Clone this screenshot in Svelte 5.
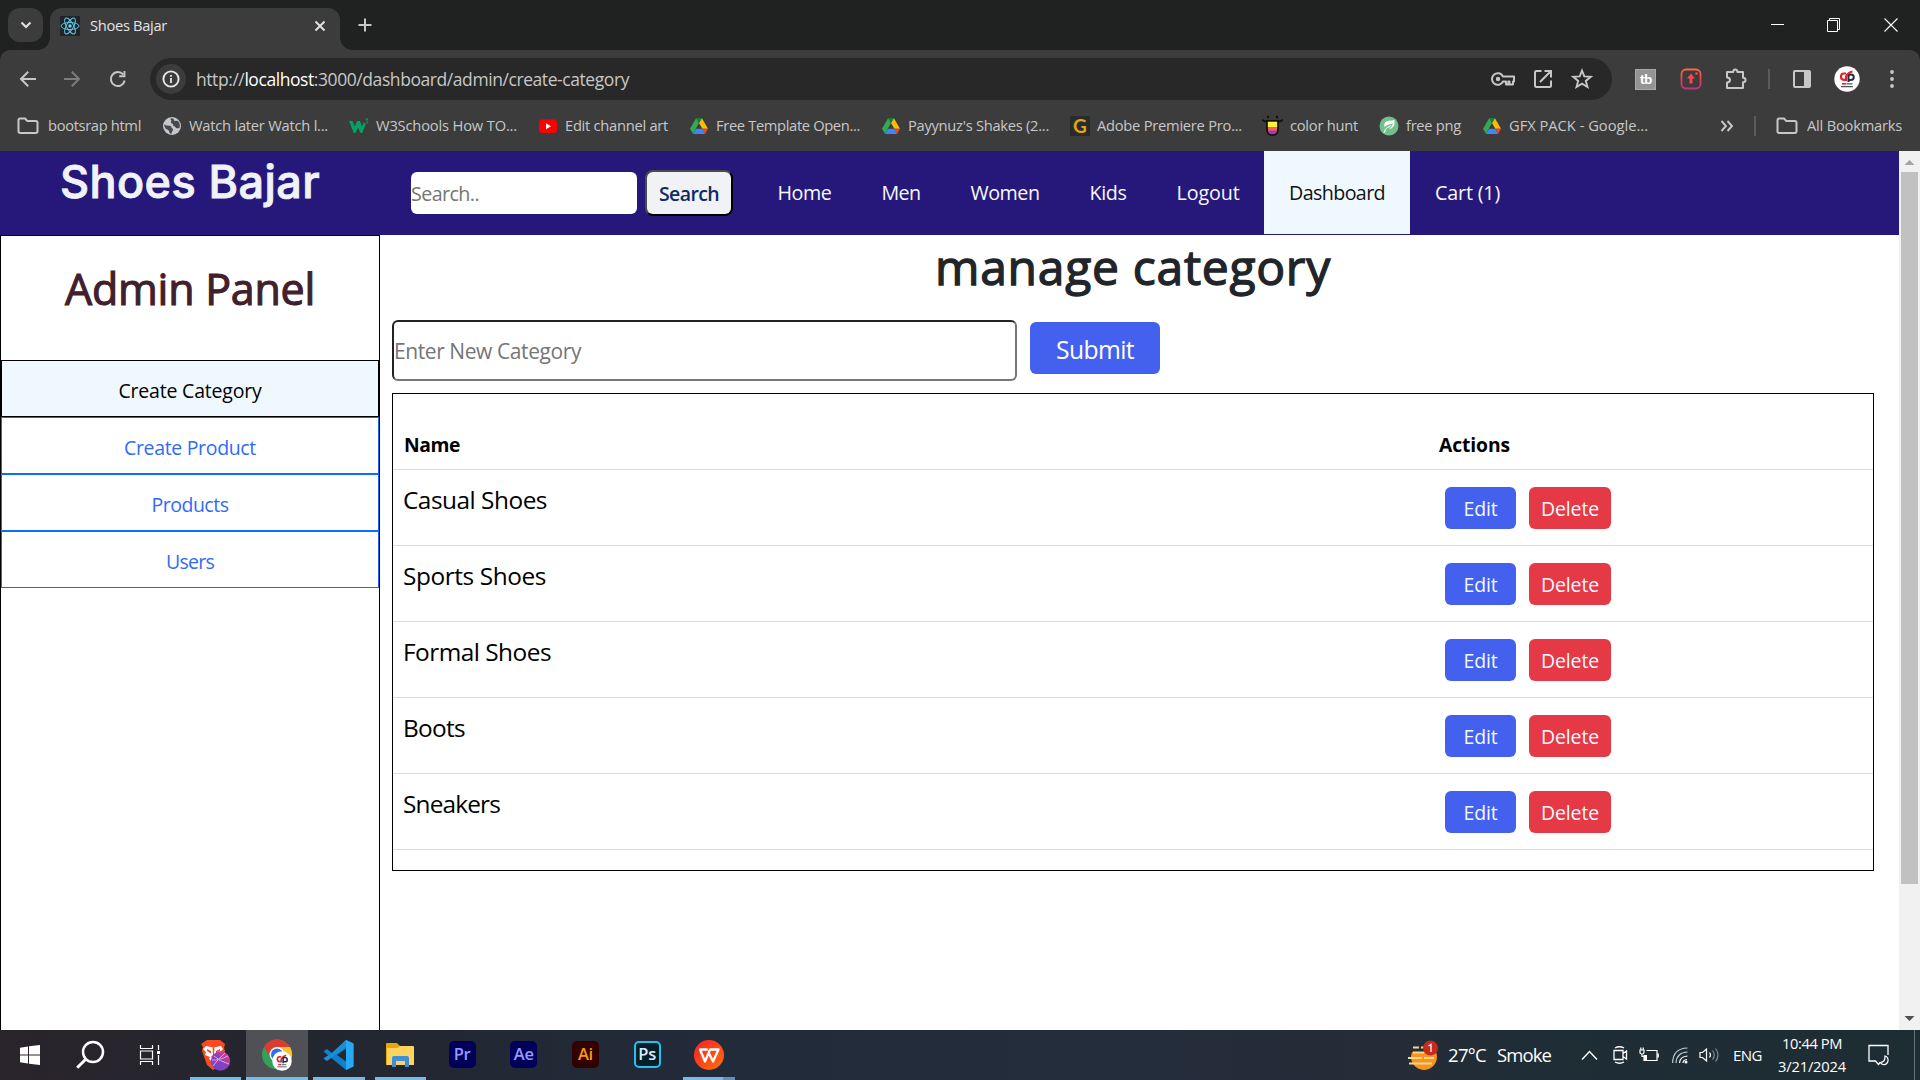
<script>
  const bookmarks = [
    { icon: 'folder', text: 'bootsrap html', w: 93 },
    { icon: 'globe', text: 'Watch later Watch l...', w: 139 },
    { icon: 'w3', text: 'W3Schools How TO...', w: 141 },
    { icon: 'yt', text: 'Edit channel art', w: 103 },
    { icon: 'drive', text: 'Free Template Open...', w: 144 },
    { icon: 'drive', text: "Payynuz's Shakes (2...", w: 141 },
    { icon: 'g', text: 'Adobe Premiere Pro...', w: 145 },
    { icon: 'hunt', text: 'color hunt', w: 68 },
    { icon: 'png', text: 'free png', w: 55 },
    { icon: 'drive', text: 'GFX PACK - Google...', w: 139 }
  ];
  const links = [
    { text: 'Home', w: 54 },
    { text: 'Men', w: 39 },
    { text: 'Women', w: 69 },
    { text: 'Kids', w: 37 },
    { text: 'Logout', w: 63 },
    { text: 'Dashboard', w: 96, active: true },
    { text: 'Cart (1)', w: 65 }
  ];
  const menu = [
    { text: 'Create Category', w: 143, active: true },
    { text: 'Create Product', w: 132 },
    { text: 'Products', w: 77 },
    { text: 'Users', w: 48 }
  ];
  const categories = [
    { name: 'Casual Shoes', w: 144 },
    { name: 'Sports Shoes', w: 143 },
    { name: 'Formal Shoes', w: 148 },
    { name: 'Boots', w: 62 },
    { name: 'Sneakers', w: 97 }
  ];
  const apps = [
    { id: 'brave', open: true },
    { id: 'chrome', open: true, active: true },
    { id: 'code', open: true },
    { id: 'files', open: true },
    { id: 'Pr', bg: '#00005b', fg: '#9999ff', line: '#00005b' },
    { id: 'Ae', bg: '#00005b', fg: '#9999ff', line: '#00005b' },
    { id: 'Ai', bg: '#330000', fg: '#ff9a00', line: '#330000' },
    { id: 'Ps', bg: '#061e26', fg: '#d5f1ff', line: '#26c0f5' },
    { id: 'wps', open: true, stacked: true }
  ];

  // Tracks a label so that it fills the given width in pixels.
  function fit(node, width) {
    const natural = node.getBoundingClientRect().width;
    const n = node.textContent.length;
    node.style.letterSpacing = `${((width - natural) / n).toFixed(3)}px`;
  }
</script>

{#snippet label(text, w)}<span class="label" use:fit={w}>{text}</span>{/snippet}

{#snippet folder()}
  <svg width="22" height="18" viewBox="0 0 22 18"><path d="M1.5 3.2Q1.5 1.5 3.2 1.5H8L10.300 4H18.800Q20.500 4 20.500 5.700V14.300Q20.500 16 18.800 16H3.200Q1.500 16 1.500 14.300Z" fill="none" stroke="#c7c7c7" stroke-width="2" /></svg>
{/snippet}

{#snippet bmIcon(id)}
  {#if id === 'folder'}
    {@render folder()}
  {:else if id === 'globe'}
    <svg width="20" height="20" viewBox="0 0 20 20"><circle cx="10" cy="10" r="9" fill="#c4c7cc" /><path d="M2 8.500Q5 10 8 9.800Q10 10 9.500 12Q12 13 10.500 15Q9.500 16 9.500 18Q7 17.500 7 15Q6.500 13.500 4 13Q2.500 11.500 2 8.500ZM9.500 2Q7.500 3.500 9.500 4.500Q8 6 9.500 7.500Q12 8 11 9.800Q13.500 10 14 12Q16 12.500 17.500 12Q18.500 9 17 6Q15 4 12.500 5Q12 2.500 9.500 2Z" fill="#47484a" /></svg>
  {:else if id === 'w3'}
    <svg width="20" height="20" viewBox="0 0 20 20"><path d="M0 5H3.600L5.800 10.500L8 5H11L13 10.500L15 6L16.500 9L13.200 17H11.500L9 11.500L6.500 17H4.800Z" fill="#04a065" /><path d="M16.300 3H19L17.700 4.700Q19.500 5.300 18.700 6.800Q17.800 8 16.200 7" fill="none" stroke="#04a065" /></svg>
  {:else if id === 'yt'}
    <svg width="20" height="20" viewBox="0 0 20 20"><rect x="1" y="3.500" width="18" height="13.500" rx="3.500" fill="#f00" /><path d="M8 7.200L13 10.200L8 13.200Z" fill="#fff" /></svg>
  {:else if id === 'drive'}
    <svg width="20" height="20" viewBox="0 0 20 20"><path d="M7.300 2L10 7L4 17.700L1 12.700Z" fill="#34a853" /><path d="M12.800 2L19 12.700H13.300L10 7Z" fill="#fbbc04" /><path d="M7.300 2H12.800L10 7Z" fill="#188038" /><path d="M4 17.900L7 12.700H13.300L16 17.900Z" fill="#4285f4" /><path d="M13.300 12.700H19L16 17.900Z" fill="#ea4335" /></svg>
  {:else if id === 'g'}
    <span class="gee">G</span>
  {:else if id === 'hunt'}
    <svg width="20" height="20" viewBox="0 0 20 20"><circle cx="5" cy="1" r="1.200" fill="#101010" /><circle cx="14" cy="1" r="1.200" fill="#101010" /><path d="M-.5 3.500Q1.500 6.500 4 4.800H15Q17.500 6.500 19.500 3.500" fill="none" stroke="#101010" stroke-width="1.800" /><path d="M4 5H15V13Q15 19 9.500 19Q4 19 4 13Z" fill="#ff5b5b" stroke="#101010" stroke-width="1.800" /><path d="M4.900 5.700H14.100V11H4.900Z" fill="#fff338" /><path d="M5 14.500H14Q13.500 18.200 9.500 18.200Q5.500 18.200 5 14.500Z" fill="#a03cb0" /></svg>
  {:else if id === 'png'}
    <svg width="20" height="20" viewBox="0 0 20 20"><circle cx="10" cy="10" r="9.500" fill="#72c08c" /><path d="M4.500 17.500Q5 12.500 9.500 10.500L13 8.500Q11 11.800 8 12.200Q5.800 13.500 6.500 15.500ZM5.300 11Q4.500 5 10 4.800Q13 4.800 15.500 4Q16.500 12 10 13.300Q13.500 10.500 14 7.500Q9 8 5.300 11Z" fill="#fff" /></svg>
  {/if}
{/snippet}

{#snippet profile(size)}
  <svg width={size} height={size} viewBox="0 0 26 26"><circle cx="13" cy="13" r="12.700" fill="#fff" /><path d="M12 7.500H9.800Q7 7.500 7 10.800Q7 13.800 9.800 13.800H12V10.500Q14 6.500 18.500 5.500" fill="none" stroke="#e32129" stroke-width="2.200" /><path d="M14.500 16V9.800Q15 8.500 16.800 8.500Q19.800 8.500 19.800 11.300Q19.800 14 16.800 14H15" fill="none" stroke="#20304a" stroke-width="2" /><path d="M8 17.800H12" stroke="#e32129" stroke-width="1.600" /><path d="M12.500 17.800H18.500M7 20.600H19" stroke="#555" stroke-width="1.200" /></svg>
{/snippet}

<div class="screen">
  <header class="browser">
    <div class="tabs">
      <div class="tabsearch"><svg width="12" height="8" viewBox="0 0 12 8"><path d="M1.500 1.500L6 6L10.500 1.500" fill="none" stroke="#e3e3e3" stroke-width="2" /></svg></div>
      <div class="tab">
        <svg class="fav" width="20" height="20" viewBox="0 0 20 20"><rect width="20" height="20" rx="1" fill="#20232a" /><g fill="none" stroke="#61c7e0" stroke-width="1"><ellipse cx="10" cy="10" rx="9" ry="3.500" /><ellipse cx="10" cy="10" rx="9" ry="3.500" transform="rotate(60 10 10)" /><ellipse cx="10" cy="10" rx="9" ry="3.500" transform="rotate(120 10 10)" /></g><circle cx="10" cy="10" r="1.700" fill="#61dafb" /></svg>
        {@render label('Shoes Bajar', 77)}
        <svg class="x" width="12" height="12" viewBox="0 0 12 12"><path d="M1.500 1.500L10.500 10.500M10.500 1.500L1.500 10.500" stroke="#e3e3e3" stroke-width="1.900" /></svg>
      </div>
      <svg class="plus" width="14" height="14" viewBox="0 0 14 14"><path d="M7 .5V13.500M.5 7H13.500" stroke="#c7c7c7" stroke-width="2" /></svg>
      <div class="winctl">
        <svg width="13" height="13" viewBox="0 0 13 13"><path d="M0 6.500H13" stroke="#fff" /></svg>
        <svg width="14" height="14" viewBox="0 0 14 14"><path d="M.5 2.500H10.500V13.500H.5ZM2.500 2.500V.500H12.500V11.500H10.500" fill="none" stroke="#fff" /></svg>
        <svg width="14" height="14" viewBox="0 0 14 14"><path d="M.5 .5L13.500 13.500M13.500 .5L.5 13.500" stroke="#fff" stroke-width="1.100" /></svg>
      </div>
    </div>

    <div class="toolbar">
      <div class="nav">
        <svg width="18" height="18" viewBox="0 0 18 18"><path d="M17 9H2.500M9.200 1.800L2 9L9.200 16.200" fill="none" stroke="#c7c7c7" stroke-width="2" /></svg>
        <svg width="18" height="18" viewBox="0 0 18 18"><path d="M0 9H14.500M7.800 1.800L15 9L7.800 16.200" fill="none" stroke="#7d7d7d" stroke-width="2" /></svg>
        <svg width="18" height="18" viewBox="0 0 18 18"><path d="M15.700 10.500A7 7 0 1 1 14.200 4.500" fill="none" stroke="#c7c7c7" stroke-width="2" /><path d="M16.400 1V7.200H10.200V5.300H14.500V1Z" fill="#c7c7c7" /></svg>
      </div>
      <div class="omnibox">
        <div class="info"><svg width="18" height="18" viewBox="0 0 18 18"><circle cx="9" cy="9" r="7.600" fill="none" stroke="#e8e8e8" stroke-width="1.900" /><path d="M9 8V13M9 5V6.800" stroke="#e8e8e8" stroke-width="1.800" /></svg></div>
        <span class="url"><span class="label" use:fit={433}>http://<b>localhost</b>:3000/dashboard/admin/create-category</span></span>
        <div class="omniicons">
          <svg width="24" height="20" viewBox="0 0 24 20"><path d="M12 7.500A5.800 5.800 0 1 0 12 12.500H15V15.500H17.300V12.500H18.500V15.500H22V12.500H23V7.500Z" fill="none" stroke="#c7c7c7" stroke-width="2" stroke-linejoin="round" /><circle cx="7" cy="10" r="2.200" fill="#c7c7c7" /></svg>
          <svg width="20" height="20" viewBox="0 0 20 20"><path d="M8.500 2H3.500Q2 2 2 3.500V16.500Q2 18 3.500 18H16.500Q18 18 18 16.500V11.500M11.500 2H18V8.500M18 2L7 13" fill="none" stroke="#c7c7c7" stroke-width="2" /></svg>
          <svg width="22" height="22" viewBox="0 0 22 22"><path d="M11 2.500L13.300 8.400L19.800 8.800L14.800 12.900L16.500 19L11 15.600L5.500 19L7.200 12.900L2.200 8.800L8.700 8.400Z" fill="none" stroke="#c7c7c7" stroke-width="1.900" /></svg>
        </div>
      </div>
      <div class="exts">
        <div class="tb">tb</div>
        <svg class="grow" width="22" height="22" viewBox="0 0 22 22"><defs><linearGradient id="ig" x1="0" y1="0" x2="0" y2="1"><stop offset="0" stop-color="#ff6a3a" /><stop offset=".5" stop-color="#f0385a" /><stop offset="1" stop-color="#c8307c" /></linearGradient></defs><rect x="1.500" y="1.500" width="19" height="19" rx="4.500" fill="none" stroke="url(#ig)" stroke-width="1.800" /><path d="M11 5.500L15 10.500H12.500V15.500H9.500V10.500H7Z" fill="#ff4158" /><circle cx="16.500" cy="5.500" r="1.300" fill="#ff4b4b" /></svg>
        <svg class="puzzle" width="24" height="24" viewBox="0 0 24 24"><path d="M3 5H9.200Q9.200 2.500 11.300 2.500Q13.400 2.500 13.400 5H19V10.800Q21.500 10.800 21.500 13Q21.500 15.200 19 15.200V21H3V15.500Q6 15.200 6 13Q6 10.800 3 10.500Z" fill="none" stroke="#c7c7c7" stroke-width="2" stroke-linejoin="round" /></svg>
        <i class="sep"></i>
        <svg class="panel" width="20" height="20" viewBox="0 0 20 20"><rect x="2" y="2" width="16" height="16" rx="1" fill="none" stroke="#c7c7c7" stroke-width="2" /><rect x="12" y="2" width="6" height="16" fill="#c7c7c7" /></svg>
        <div class="avatar">{@render profile(26)}</div>
        <svg class="dots" width="6" height="20" viewBox="0 0 6 20"><circle cx="3" cy="3" r="1.900" fill="#c7c7c7" /><circle cx="3" cy="10" r="1.900" fill="#c7c7c7" /><circle cx="3" cy="17" r="1.900" fill="#c7c7c7" /></svg>
      </div>
    </div>

    <div class="bookmarks">
      {#each bookmarks as b}
        <div class="bm" class:dir={b.icon === 'folder'}>{@render bmIcon(b.icon)}{@render label(b.text, b.w)}</div>
      {/each}
      <div class="bmend">
        <svg width="14" height="12" viewBox="0 0 14 12"><path d="M1.500 1L6 6L1.500 11M7.500 1L12 6L7.500 11" fill="none" stroke="#c7c7c7" stroke-width="1.900" /></svg>
        <i class="sep"></i>
        <div class="bm all">{@render folder()}{@render label('All Bookmarks', 95)}</div>
      </div>
    </div>
  </header>

  <div class="viewport">
    <div class="page">
      <nav class="top">
        <div class="brand">{@render label('Shoes Bajar', 260)}</div>
        <div class="search">
          <div class="field">{@render label('Search..', 68)}</div>
          <button class="go">{@render label('Search', 60)}</button>
        </div>
        <div class="links">
          {#each links as l}
            <a href="#top" class:active={l.active}>{@render label(l.text, l.w)}</a>
          {/each}
        </div>
      </nav>

      <div class="body">
        <aside>
          <h3>{@render label('Admin Panel', 250)}</h3>
          {#each menu as m}
            <a href="#menu" class:active={m.active}>{@render label(m.text, m.w)}</a>
          {/each}
        </aside>
        <main>
          <h1>{@render label('manage category', 396)}</h1>
          <div class="form">
            <div class="newcat">{@render label('Enter New Category', 187)}</div>
            <button class="submit">{@render label('Submit', 78)}</button>
          </div>
          <div class="table">
            <div class="row head"><div>{@render label('Name', 56)}</div><div>{@render label('Actions', 71)}</div></div>
            {#each categories as c}
              <div class="row">
                <div class="name">{@render label(c.name, c.w)}</div>
                <div class="actions">
                  <button class="edit">{@render label('Edit', 34)}</button>
                  <button class="delete">{@render label('Delete', 58)}</button>
                </div>
              </div>
            {/each}
          </div>
        </main>
      </div>
    </div>
    <div class="scroll">
      <svg width="21" height="21" viewBox="0 0 21 21"><path d="M5.500 14L10.500 9L15.500 14Z" fill="#a3a3a3" /></svg>
      <div class="thumb"></div>
      <svg class="down" width="21" height="21" viewBox="0 0 21 21"><path d="M5.500 7L10.500 12L15.500 7Z" fill="#505050" /></svg>
    </div>
  </div>

  <footer class="taskbar">
    <div class="sys"><svg width="20" height="20" viewBox="0 0 20 20"><path d="M0 2.700L8 1.500V9.500H0ZM9 1.300L20 0V9.500H9ZM0 10.500H8V18.500L0 17.300ZM9 10.500H20V20L9 18.700Z" fill="#fff" /></svg></div>
    <div class="sys"><svg width="28" height="28" viewBox="0 0 28 28"><circle cx="17" cy="11" r="10" fill="none" stroke="#fff" stroke-width="2.500" /><path d="M9.500 18.500L1.200 26.800" stroke="#fff" stroke-width="3" /></svg></div>
    <div class="sys"><svg width="21" height="20" viewBox="0 0 21 20"><path d="M.5 0V3.500H12.500V0M.5 20V16.500H12.500V20M.5 6H12.500V14H.5ZM18.500 0V5M18.500 10V20" fill="none" stroke="#fff" stroke-width="1.200" /><rect x="17" y="6" width="3" height="3" fill="#fff" /></svg></div>
    <div class="apps">
      {#each apps as a}
        <div class="app" class:active={a.active} class:open={a.open} class:stacked={a.stacked}>
          {#if a.id === 'brave'}
            <svg width="32" height="32" viewBox="0 0 32 32"><path d="M8 1H21L26 5L25 9L26 12L21 27L14 31L8 26L3 12L4 8L2 5L5 3Z" fill="#fb4a1e" /><path d="M7 7L12 8H17L22 7L24 10L21 13L22 16L18 18L19 20L15 24L10 20L11 18L6 16L7 13L4 10Z" fill="#fff" /><path d="M8 10L12 12V14.500L8 12ZM21 10L17 12V14.500L21 12ZM13.500 8H15.500L15 16L17 18L14.500 20L12 18L14 16Z" fill="#fb4a1e" /><defs><linearGradient id="pl" x1="0" y1="1" x2="1" y2="0"><stop offset="0" stop-color="#5a4be0" /><stop offset=".5" stop-color="#8c3fb8" /><stop offset="1" stop-color="#e8467c" /></linearGradient></defs><circle cx="21.500" cy="22" r="9.700" fill="url(#pl)" /><path d="M13 21Q19 22 29 17M15 17Q20 22 30 25M14 27Q19 20 26 14" fill="none" stroke="#e2a5dc" stroke-width="1" /></svg>
          {:else if a.id === 'chrome'}
            <svg class="chrome" width="33" height="33" viewBox="0 0 33 33"><circle cx="16" cy="15.500" r="15" fill="#34a05a" /><path d="M3 8A15 15 0 0 1 29 8H16L10 19Z" fill="#dc3b30" /><path d="M16 8H29A15 15 0 0 1 16 30.500L22 19Z" fill="#fbc12f" /><circle cx="16" cy="15.500" r="7.500" fill="#fff" /><circle cx="16" cy="15.500" r="6" fill="#2d72e8" /></svg>
            <div class="badge">{@render profile(20)}</div>
          {:else if a.id === 'code'}
            <svg width="30" height="30" viewBox="0 0 30 30"><path d="M22 0L8 13L3 9L0 11V12L22 30L29.500 26.500V3.500Z" fill="#0f7fc9" /><path d="M0 18V19L3 21L22 7V0L8 13Z" fill="#1a8fd8" /><path d="M22 0L29.500 3.500V26.500L22 30Z" fill="#27aaf3" /><path d="M22 8.500V21.500L13 15Z" fill="#222731" /></svg>
          {:else if a.id === 'files'}
            <svg width="28" height="24" viewBox="0 0 28 24"><path d="M0 1Q0 0 1 0H11L14 3H26V22H0Z" fill="#e8a50c" /><path d="M1 5H12L14 3H27Q28 3 28 4V22H1Z" fill="#ffd45e" /><path d="M6 24V15Q6 13 8 13H21Q23 13 23 15V24H19V18H10V24Z" fill="#3f8fd8" /></svg>
          {:else if a.id === 'wps'}
            <svg width="30" height="30" viewBox="0 0 30 30"><defs><linearGradient id="wp" x1="0" y1="0" x2="1" y2="1"><stop offset="0" stop-color="#fb1e22" /><stop offset="1" stop-color="#ff7110" /></linearGradient></defs><circle cx="15" cy="15" r="15" fill="url(#wp)" /><path d="M13.800 9.500H6L11 21.500L16 9.500H24.500L19 21.500L14.800 13" fill="none" stroke="#fff" stroke-width="2.300" stroke-linejoin="round" /></svg>
          {:else}
            <div class="adobe" style="background: {a.bg}; color: {a.fg}; border-color: {a.line}">{a.id}</div>
          {/if}
        </div>
      {/each}
    </div>
    <div class="tray">
      <svg class="weather" width="31" height="31" viewBox="0 0 31 31"><path d="M4 12H28A13 13 0 1 1 3 16Z" fill="#f7931e" /><path d="M5 7.500H11M13 7.500H17M5 12.500H16M0 18H14M16 18H26M1 23.500H24" stroke="#f6d78b" stroke-width="2.200" /><circle cx="22.500" cy="8" r="7.500" fill="#c42b1c" /><path d="M20.500 6L23 4.500V12" fill="none" stroke="#fff" stroke-width="1.300" /></svg>
      <span class="temp">{@render label('27°C', 38)}</span>
      <span class="cond">{@render label('Smoke', 54)}</span>
      <svg class="chev" width="17" height="11" viewBox="0 0 17 11"><path d="M1 9.500L8.500 1.500L16 9.500" fill="none" stroke="#fff" stroke-width="1.400" /></svg>
      <svg class="cam" width="15" height="18" viewBox="0 0 15 18"><path d="M1 4.500H10V13.500H1ZM10 7.500L13.500 5V13L10 10.500M2 2Q6.500 -.5 11 2M2 16Q6.500 18.500 11 16" fill="none" stroke="#fff" stroke-width="1.300" /></svg>
      <svg class="bat" width="20" height="16" viewBox="0 0 20 16"><path d="M5 8V13.500H18V3.500H7.500M19.300 6.500V10.500M1 3H5V5.500Q5 7 3 7Q1 7 1 5.500ZM1.800 .5V3M4.200 .5V3M3 7V9.500H5" fill="none" stroke="#fff" stroke-width="1.200" /><rect x="5" y="8" width="3" height="5" fill="#fff" /></svg>
      <svg class="wifi" width="16" height="17" viewBox="0 0 16 17"><g fill="none" stroke="#fff" stroke-width="1.200"><path d="M.7 16Q.7 1.500 15.500 1M4 16Q4.500 5.500 15.500 5" opacity=".75" /><path d="M7.500 16Q8 9.500 15.500 9" /><path d="M11 16Q11 13 15 12.500" /></g><circle cx="14" cy="15" r="1.500" fill="#fff" /></svg>
      <svg class="vol" width="21" height="16" viewBox="0 0 21 16"><path d="M1 5.500H3.500L7.500 2V14L3.500 10.500H1Z" fill="none" stroke="#fff" stroke-width="1.200" /><path d="M10.500 5.500Q12.500 8 10.500 10.500" fill="none" stroke="#fff" stroke-width="1.200" /><path d="M13.500 3.500Q17 8 13.500 12.500M16.500 1.500Q21.500 8 16.500 14.500" fill="none" stroke="#7f888e" stroke-width="1.200" /></svg>
      <span class="lang">{@render label('ENG', 29)}</span>
      <div class="clock"><div>{@render label('10:44 PM', 60)}</div><div>{@render label('3/21/2024', 68)}</div></div>
      <svg class="note" width="21" height="22" viewBox="0 0 21 22"><path d="M20 11V1.500H1V17H7.500L10.500 20.500L12.500 18" fill="none" stroke="#fff" stroke-width="1.300" /><path d="M17 12Q20.500 13 20 17Q19 21 15 20.500Q13 20 12.500 18.500Q17.500 18 17 12Z" fill="none" stroke="#fff" stroke-width="1.200" /></svg>
      <i class="edge"></i>
    </div>
  </footer>
</div>

<style>
  :global(body) { margin: 0; overflow: hidden; background: #fff; }
  .screen { width: 1920px; height: 1080px; display: flex; flex-direction: column; overflow: hidden; font-family: "Open Sans", "Noto Sans", sans-serif; }
  .screen * { box-sizing: border-box; }
  svg { display: block; flex: none; overflow: visible; }
  .label { display: inline-block; white-space: pre; }
  a { text-decoration: none; }
  button { font-family: inherit; padding: 0; border: 0; display: flex; align-items: center; justify-content: center; }

  .browser { height: 151px; background: #202221; color: #c7c7c7; font-size: 14.700px; }
  .tabs { height: 50px; display: flex; align-items: flex-start; padding: 8px 0 0 8px; }
  .tabsearch { width: 35px; height: 34px; border-radius: 12px; background: #3c3c3c; display: grid; place-items: center; margin-right: 7px; }
  .tab { width: 290px; height: 42px; background: #3c3c3c; border-radius: 12px 12px 0 0; display: flex; align-items: center; padding: 0 14px 6px 10px; color: #e3e3e3; position: relative; }
  .tab .label, .bm .label { margin-bottom: 2px; }
  .tab::before, .tab::after { content: ""; position: absolute; bottom: 0; width: 12px; height: 12px; }
  .tab::before { left: -12px; background: radial-gradient(circle at 0 0, transparent 11.500px, #3c3c3c 12px); }
  .tab::after { right: -12px; background: radial-gradient(circle at 100% 0, transparent 11.500px, #3c3c3c 12px); }
  .fav { margin-right: 10px; }
  .x { margin-left: auto; }
  .plus { margin: 10px 0 0 18px; }
  .winctl { margin-left: auto; display: flex; gap: 43px; padding: 10px 22px 0 0; }

  .toolbar { height: 58px; background: #3c3c3c; border-radius: 10px 10px 0 0; display: flex; align-items: center; padding: 0 25px 0 19px; }
  .nav { display: flex; gap: 27px; width: 131px; }
  .omnibox { width: 1462px; height: 42px; border-radius: 21px; background: #282828; display: flex; align-items: center; padding: 0 19px 0 6px; }
  .info { width: 30px; height: 30px; border-radius: 50%; background: #3c3c3c; display: grid; place-items: center; }
  .url { margin-left: 10px; font-size: 17.500px; }
  .url b { font-weight: 400; color: #fff; }
  .omniicons { margin-left: auto; display: flex; align-items: center; gap: 18px; }
  .exts { margin-left: auto; display: flex; align-items: center; }
  .grow { margin-left: 24px; }
  .puzzle { margin: 0 20px 0 22px; }
  .panel { margin: 0 22px; }
  .dots { margin-left: 29px; }
  .tb { width: 21px; height: 21px; background: #949494; border: 1px solid #a8a8a8; color: #fff; font: 900 14px/18px "Lato", sans-serif; text-align: center; letter-spacing: -1px; }
  .sep { width: 2px; height: 20px; background: #5c5c5c; }

  .bookmarks { height: 43px; background: #3c3c3c; display: flex; align-items: center; padding: 0 18px 7px 17px; gap: 21px; }
  .bm { display: flex; align-items: center; gap: 7px; }
  .bm.dir, .bm.all { gap: 9px; }
  .gee { width: 20px; height: 20px; background: #2b2b2b; color: #dba51e; font: 700 19px/20px "Lato", sans-serif; text-align: center; }
  .bmend { margin-left: auto; display: flex; align-items: center; gap: 20px; }

  .viewport { height: 879px; display: flex; }
  .page { width: 1899px; height: 879px; background: #fff; }
  .top { height: 84px; background: #26187b; display: flex; }
  .brand { width: 411px; padding-left: 60px; color: #f0f2f7; font: 500 45px/61px "Inter", sans-serif; -webkit-text-stroke: .9px #f0f2f7; }
  .search { display: flex; align-items: center; gap: 8px; width: 341.500px; }
  .field { width: 226px; height: 42px; background: #fff; border-radius: 6px; display: flex; align-items: center; font-size: 19.700px; color: #757575; padding-top: 1px; }
  .go { width: 88px; height: 46px; background: #f0f2f6; border: 2px solid #000; border-top-color: #4c4c4c; border-left-color: #4c4c4c; border-radius: 8px; font-weight: 600; font-size: 19.500px; color: #0d2b66; }
  .links { display: flex; height: 83px; }
  .links a { padding: 0 25px; display: flex; align-items: center; color: #f7f8fc; font-size: 19.700px; }
  .links .active { background: #f0f8ff; color: #111; margin-left: -.5px; }

  .body { display: flex; height: 795px; }
  aside { width: 380px; border: 1px solid #000; border-bottom: 0; text-align: center; }
  h3 { margin: 0; height: 124px; padding-top: 22px; font-weight: 400; -webkit-text-stroke: 1.100px #41202d; font-size: 43px; line-height: 62px; color: #41202d; }
  aside a { height: 57px; border: 1px solid #0d6efd; display: flex; align-items: center; justify-content: center; font-size: 19.500px; color: #2f6bf6; padding-top: 3px; }
  aside .active { background: #f0f8ff; border-color: #000; color: #000; }
  main { width: 1482px; margin-left: 12px; }
  h1 { margin: 0; height: 85px; text-align: center; font-weight: 400; -webkit-text-stroke: 1.300px #212529; font-size: 48px; line-height: 64px; color: #212529; }
  .form { display: flex; height: 73px; gap: 13px; }
  .newcat { width: 625px; height: 61px; border: 2px solid #767676; border-top-color: #222; border-left-color: #222; border-radius: 6px; font-size: 21px; color: #757575; display: flex; align-items: center; padding-top: 1px; }
  .submit { width: 130px; height: 52px; margin-top: 2px; background: #4361ee; color: #fff; border-radius: 6px; font-size: 24.700px; padding-top: 2px; }
  .table { height: 478px; border: 1px solid #000; color: #000; }
  .row { height: 76px; border-bottom: 1px solid #d8dadd; display: grid; grid-template-columns: 1035px 1fr; padding-left: 11px; }
  .head { font-size: 19.300px; font-weight: 700; align-items: end; padding-bottom: 11px; }
  .name { font-size: 24.400px; line-height: 34px; padding-top: 13px; margin-left: -1px; }
  .actions { display: flex; gap: 13px; padding: 17px 0 0 6px; }
  .edit, .delete { height: 42px; border-radius: 6px; color: #f4f8ff; font-size: 19.500px; padding-top: 1px; }
  .edit { width: 71px; background: #4361ee; }
  .delete { width: 82px; background: #e63946; }

  .scroll { width: 21px; background: #f1f1f1; display: flex; flex-direction: column; align-items: center; }
  .thumb { width: 17px; height: 712px; background: #c1c1c1; }
  .down { margin-top: auto; }

  .taskbar { height: 50px; background: linear-gradient(90deg, #2a242b 0, #22262f 320px, #222b3a 700px, #232d3c 1100px, #262c37 1390px, #1f2d36 1520px, #1e2d34 1920px); display: flex; color: #fff; }
  .sys { width: 60px; display: grid; place-items: center; }
  .sys:nth-child(3) { width: 64.500px; padding-right: 4px; }
  .apps { display: flex; }
  .app { width: 61.700px; height: 50px; display: grid; place-items: center; position: relative; }
  .app.active { background: #505157; }
  .app.open::after { content: ""; position: absolute; bottom: 0; left: 5px; right: 5px; height: 3px; background: #76b9ed; }
  .app.active::after { left: 0; right: 0; }
  .app.stacked::after { background: linear-gradient(90deg, #76b9ed 40px, #5c92bd 40px); }
  .badge { position: absolute; left: 26px; top: 21px; }
  .adobe { width: 27px; height: 27px; border: 2px solid; border-radius: 5px; font-weight: 600; font-size: 16.500px; line-height: 21px; text-align: center; letter-spacing: -.3px; margin-bottom: 2px; }
  .tray { margin-left: auto; display: flex; align-items: center; }
  .temp, .cond { font-size: 18.500px; padding-bottom: 1px; }
  .weather { margin-right: 9px; }
  .temp { width: 49px; }
  .cond { width: 84px; }
  .chev { margin-right: 15px; }
  .cam { margin-right: 11px; }
  .bat { margin-right: 13px; }
  .wifi { margin-right: 11px; }
  .vol { margin-right: 13px; }
  .lang { width: 45px; font-size: 15px; }
  .clock { width: 68px; font-size: 14.700px; line-height: 23px; text-align: center; margin-right: 22px; padding-bottom: 1px; }
  .note { margin-right: 25px; }
  .edge { width: 1px; height: 50px; background: #68747a; margin-right: 5px; }
</style>
